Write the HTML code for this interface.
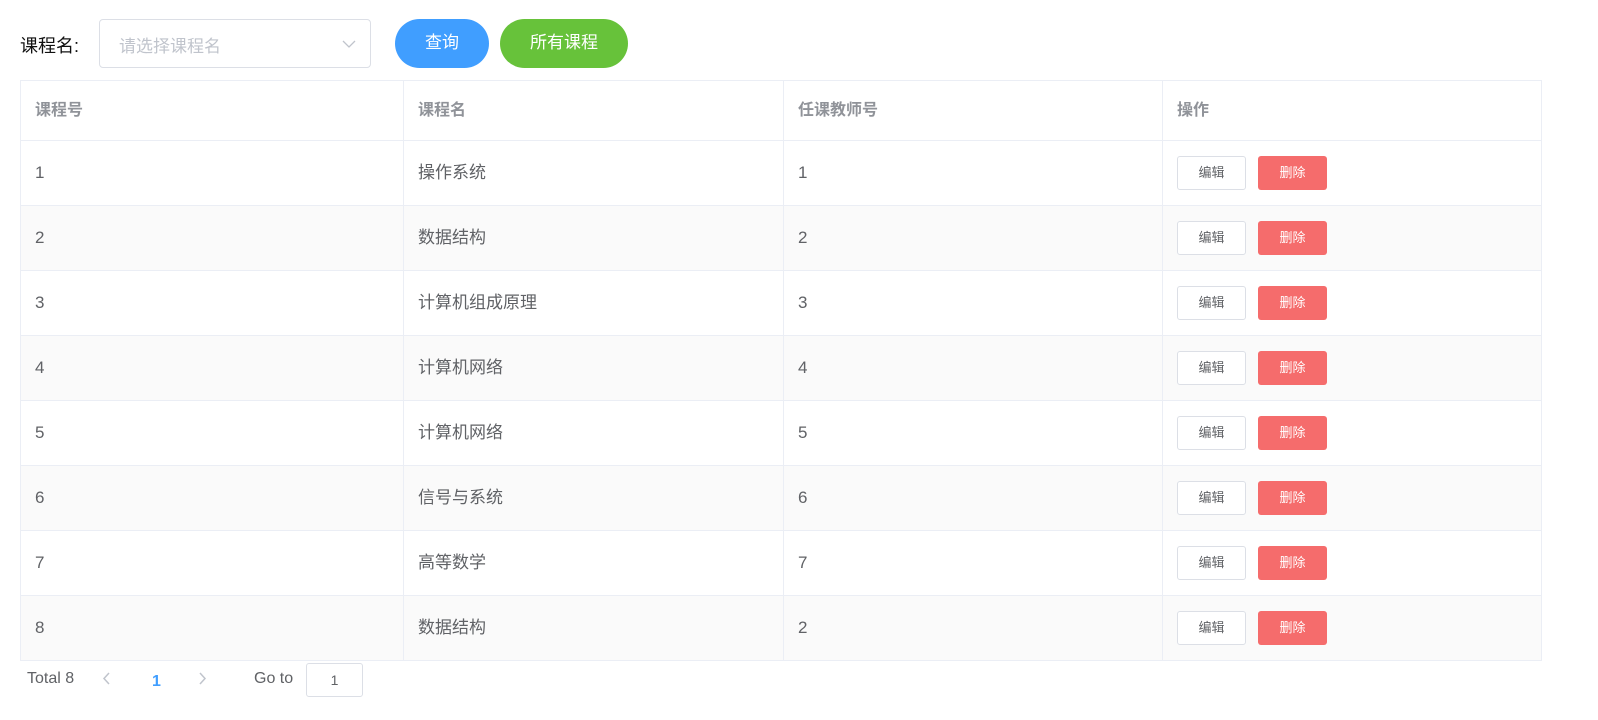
<!DOCTYPE html>
<html><head><meta charset="utf-8"><style>
body{margin:0;width:1598px;height:720px;background:#fff;font-family:"Liberation Sans","Noto Sans CJK SC",sans-serif;position:relative;overflow:hidden;color:#606266}
.a{position:absolute}
.lbl{left:20px;top:32px;font-size:18px;color:#111}
.sel{left:99px;top:19px;width:270px;height:47px;border:1px solid #dcdfe6;border-radius:4px}
.sel span{position:absolute;left:19px;top:12px;font-size:17px;color:#c0c4cc}
.btn{top:19px;height:49px;border-radius:25px;color:#fff;font-size:17px;text-align:center;line-height:47px}
table{position:absolute;left:20px;top:80px;width:1522px;border-collapse:collapse;font-size:17px;table-layout:fixed}
td,th{border:1px solid #ebeef5;text-align:left;padding:0 0 0 14px;height:64px;line-height:20px;vertical-align:middle}
th{height:59px;color:#909399;font-weight:bold;font-size:16px}
tr:nth-child(odd) td{background:#fafafa}
.e,.d{display:inline-block;width:67px;height:32px;border-radius:3px;font-size:13px;text-align:center;line-height:32px;vertical-align:middle}
.e{border:1px solid #dcdfe6;color:#606266;background:#fff;margin-right:12px;height:32px}
.d{background:#f56c6c;color:#fff;width:69px;height:34px;line-height:34px}
</style></head><body>
<div class="a lbl">课程名:</div>
<div class="a sel"><span>请选择课程名</span>
<svg class="a" style="left:242px;top:20px" width="14" height="9" viewBox="0 0 14 9"><path d="M1 1l6 6 6-6" fill="none" stroke="#c0c4cc" stroke-width="1.3"/></svg></div>
<div class="a btn" style="left:395px;width:94px;background:#409eff">查询</div>
<div class="a btn" style="left:500px;width:128px;background:#67c23a">所有课程</div>
<table>
<colgroup><col style="width:383px"><col style="width:380px"><col style="width:379px"><col></colgroup>
<tr><th>课程号</th><th>课程名</th><th>任课教师号</th><th>操作</th></tr>
<tr><td>1</td><td>操作系统</td><td>1</td><td><span class="e">编辑</span><span class="d">删除</span></td></tr>
<tr><td>2</td><td>数据结构</td><td>2</td><td><span class="e">编辑</span><span class="d">删除</span></td></tr>
<tr><td>3</td><td>计算机组成原理</td><td>3</td><td><span class="e">编辑</span><span class="d">删除</span></td></tr>
<tr><td>4</td><td>计算机网络</td><td>4</td><td><span class="e">编辑</span><span class="d">删除</span></td></tr>
<tr><td>5</td><td>计算机网络</td><td>5</td><td><span class="e">编辑</span><span class="d">删除</span></td></tr>
<tr><td>6</td><td>信号与系统</td><td>6</td><td><span class="e">编辑</span><span class="d">删除</span></td></tr>
<tr><td>7</td><td>高等数学</td><td>7</td><td><span class="e">编辑</span><span class="d">删除</span></td></tr>
<tr><td>8</td><td>数据结构</td><td>2</td><td><span class="e">编辑</span><span class="d">删除</span></td></tr>
</table>
<div class="a" style="left:27px;top:670px;font-size:16px">Total 8</div>
<svg class="a" style="left:102px;top:672px" width="8" height="13" viewBox="0 0 8 13"><path d="M7 1L2 6.5 7 12" fill="none" stroke="#c0c4cc" stroke-width="1.5"/></svg>
<div class="a" style="left:152px;top:673px;font-size:16px;font-weight:bold;color:#409eff">1</div>
<svg class="a" style="left:199px;top:672px" width="8" height="13" viewBox="0 0 8 13"><path d="M1 1l5 5.5L1 12" fill="none" stroke="#c0c4cc" stroke-width="1.5"/></svg>
<div class="a" style="left:254px;top:670px;font-size:16px">Go to</div>
<div class="a" style="left:306px;top:663px;width:55px;height:32px;border:1px solid #dcdfe6;border-radius:3px;text-align:center;line-height:32px;font-size:14px">1</div>
</body></html>
